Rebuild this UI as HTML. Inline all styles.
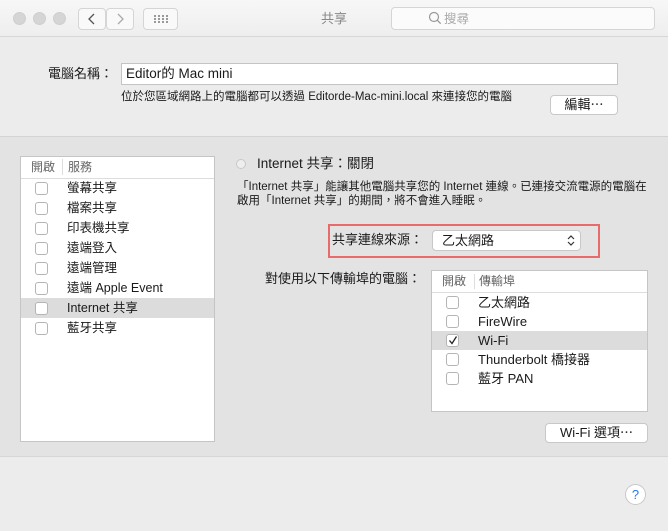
<!DOCTYPE html>
<html><head><meta charset="utf-8"><style>
*{margin:0;padding:0;box-sizing:border-box}
body{width:668px;height:531px;overflow:hidden;font-family:"Liberation Sans","Noto Sans CJK TC",sans-serif;font-size:13px;color:#1a1a1a;background:#ececec;position:relative}
.a{position:absolute;line-height:16px;white-space:nowrap}
.tb{left:0;top:0;width:668px;height:37px;background:linear-gradient(#f7f7f7,#eeeeee);border-bottom:1px solid #d6d6d6}
.dot{width:13px;height:13px;border-radius:50%;background:#d5d5d5;border:1px solid #cfcfcf;top:12px}
.btn{background:#fff;border:1px solid #c8c8c8;border-radius:4px}
.tbtn{border:1px solid #d5d5d5;border-radius:4px;background:#f9f9f9}
.mid{left:0;top:136px;width:668px;height:321px;background:#e3e3e3;border-top:1px solid #d3d3d3;border-bottom:1px solid #d6d6d6}
.box{background:#fff;border:1px solid #c5c5c5}
.cb{width:13px;height:13px;border:1px solid #b5b5b5;border-radius:3px;background:#fff}
.hd{color:#666;font-size:12px}
</style></head><body>
<div class="a tb"></div>
<div class="a dot" style="left:13px"></div>
<div class="a dot" style="left:33px"></div>
<div class="a dot" style="left:53px"></div>
<div class="a tbtn" style="left:78px;top:8px;width:28px;height:22px"><svg width="26" height="20"><path d="M15 5l-5 5 5 5" stroke="#555" stroke-width="1.3" fill="none"/></svg></div>
<div class="a tbtn" style="left:106px;top:8px;width:28px;height:22px"><svg width="26" height="20"><path d="M11 5l5 5-5 5" stroke="#aaa" stroke-width="1.3" fill="none"/></svg></div>
<div class="a tbtn" style="left:143px;top:8px;width:35px;height:22px"><svg width="33" height="20"><g fill="#999"><rect x="10" y="6" width="2" height="2"/><rect x="14" y="6" width="2" height="2"/><rect x="18" y="6" width="2" height="2"/><rect x="22" y="6" width="2" height="2"/><rect x="10" y="9" width="2" height="2"/><rect x="14" y="9" width="2" height="2"/><rect x="18" y="9" width="2" height="2"/><rect x="22" y="9" width="2" height="2"/><rect x="10" y="12" width="2" height="2"/><rect x="14" y="12" width="2" height="2"/><rect x="18" y="12" width="2" height="2"/><rect x="22" y="12" width="2" height="2"/></g></svg></div>
<div class="a" style="left:0;width:668px;top:11px;text-align:center;color:#888;font-size:13px">共享</div>
<div class="a tbtn" style="left:391px;top:7px;width:264px;height:23px;background:#fbfbfb"></div>
<svg class="a" style="left:428px;top:11px" width="14" height="14"><circle cx="6" cy="6" r="4.5" stroke="#999" fill="none" stroke-width="1.2"/><path d="M9.2 9.2l3.5 3.5" stroke="#999" stroke-width="1.3"/></svg>
<div class="a" style="left:444px;top:11px;color:#aaa;font-size:12.5px">搜尋</div>

<div class="a" style="left:48px;top:66px">電腦名稱：</div>
<div class="a" style="left:121px;top:63px;width:497px;height:22px;background:#fff;border:1px solid #c4c4c4;padding:2px 4px;font-size:13.5px">Editor的 Mac mini</div>
<div class="a" style="left:121px;top:89px;font-size:11.5px">位於您區域網路上的電腦都可以透過 Editorde-Mac-mini.local 來連接您的電腦</div>
<div class="a btn" style="left:550px;top:95px;width:68px;height:20px;text-align:center;line-height:18px">編輯⋯</div>

<div class="a mid"></div>
<div class="a box" style="left:20px;top:156px;width:195px;height:286px"></div>
<div class="a" style="left:21px;top:178px;width:193px;height:1px;background:#ddd"></div>
<div class="a" style="left:62px;top:159px;width:1px;height:16px;background:#ddd"></div>
<div class="a hd" style="left:31px;top:159px">開啟</div>
<div class="a hd" style="left:68px;top:159px">服務</div>
<div class="a" style="left:21px;top:298px;width:193px;height:20px;background:#dcdcdc"></div>
<div class="a" style="font-size:12.5px;left:0;top:0">
<div class="a cb" style="left:35px;top:182px"></div><div class="a" style="left:67px;top:180px">螢幕共享</div>
<div class="a cb" style="left:35px;top:202px"></div><div class="a" style="left:67px;top:200px">檔案共享</div>
<div class="a cb" style="left:35px;top:222px"></div><div class="a" style="left:67px;top:220px">印表機共享</div>
<div class="a cb" style="left:35px;top:242px"></div><div class="a" style="left:67px;top:240px">遠端登入</div>
<div class="a cb" style="left:35px;top:262px"></div><div class="a" style="left:67px;top:260px">遠端管理</div>
<div class="a cb" style="left:35px;top:282px"></div><div class="a" style="left:67px;top:280px">遠端 Apple Event</div>
<div class="a cb" style="left:35px;top:302px"></div><div class="a" style="left:67px;top:300px">Internet 共享</div>
<div class="a cb" style="left:35px;top:322px"></div><div class="a" style="left:67px;top:320px">藍牙共享</div>
</div>

<div class="a" style="left:236px;top:159px;width:10px;height:10px;border-radius:50%;border:1px solid #c8c8c8;background:#eee"></div>
<div class="a" style="left:257px;top:155px;font-size:13.5px;line-height:18px">Internet 共享：關閉</div>
<div class="a" style="left:237px;top:180px;width:412px;font-size:11.5px;line-height:14px;white-space:normal">「Internet 共享」能讓其他電腦共享您的 Internet 連線。已連接交流電源的電腦在啟用「Internet 共享」的期間，將不會進入睡眠。</div>

<div class="a" style="left:328px;top:224px;width:272px;height:34px;border:2px solid #e86b6b"></div>
<div class="a" style="left:332px;top:232px">共享連線來源：</div>
<div class="a btn" style="left:432px;top:230px;width:149px;height:21px;padding-left:9px;line-height:19px;font-size:13px">乙太網路</div>
<svg class="a" style="left:566px;top:233px" width="10" height="15"><path d="M2 6l3-3 3 3M2 9l3 3 3-3" stroke="#333" stroke-width="1.2" fill="none"/></svg>

<div class="a" style="left:265px;top:271px">對使用以下傳輸埠的電腦：</div>
<div class="a box" style="left:431px;top:270px;width:217px;height:142px"></div>
<div class="a" style="left:432px;top:292px;width:215px;height:1px;background:#ddd"></div>
<div class="a" style="left:474px;top:274px;width:1px;height:15px;background:#ddd"></div>
<div class="a hd" style="left:442px;top:273px">開啟</div>
<div class="a hd" style="left:479px;top:273px">傳輸埠</div>
<div class="a" style="left:432px;top:331px;width:215px;height:19px;background:#dcdcdc"></div>
<div class="a cb" style="left:446px;top:296px"></div><div class="a" style="left:478px;top:295px">乙太網路</div>
<div class="a cb" style="left:446px;top:315px"></div><div class="a" style="left:478px;top:314px">FireWire</div>
<div class="a cb" style="left:446px;top:334px"></div><svg class="a" style="left:447px;top:334px" width="12" height="12"><path d="M2.5 6.5l2.5 3 4.5-7" stroke="#222" stroke-width="1.3" fill="none"/></svg><div class="a" style="left:478px;top:333px">Wi-Fi</div>
<div class="a cb" style="left:446px;top:353px"></div><div class="a" style="left:478px;top:352px">Thunderbolt 橋接器</div>
<div class="a cb" style="left:446px;top:372px"></div><div class="a" style="left:478px;top:371px">藍牙 PAN</div>

<div class="a btn" style="left:545px;top:423px;width:103px;height:20px;text-align:center;line-height:18px">Wi-Fi 選項⋯</div>

<div class="a" style="left:625px;top:484px;width:21px;height:21px;border-radius:50%;background:#fff;border:1px solid #c8c8c8;text-align:center;line-height:19px;color:#2a7ae2;font-size:13px">?</div>
</body></html>
